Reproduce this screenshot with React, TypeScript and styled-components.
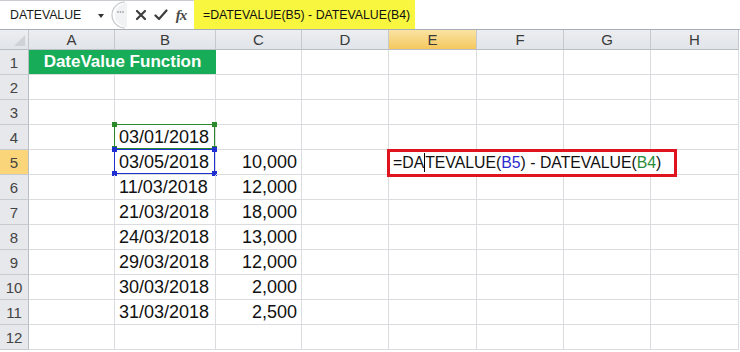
import React from "react";
import styled, { createGlobalStyle } from "styled-components";

const GlobalStyle = createGlobalStyle`
  html, body { margin: 0; padding: 0; background: #ffffff; overflow: hidden; }
  * { box-sizing: border-box; }
`;

const Page = styled.div`
  width: 740px;
  height: 352px;
  overflow: hidden;
  background: #ffffff;
  font-family: "Liberation Sans", Arial, sans-serif;
`;

const FormulaBar = styled.div`
  display: flex;
  align-items: stretch;
  height: 30px;
  border-top: 1px solid #c9ccd1;
  border-bottom: 1px solid #a9aeb6;
  background: #ffffff;
`;

const NameBox = styled.div`
  width: 108px;
  display: flex;
  align-items: center;
  justify-content: space-between;
  padding: 0 4px 0 10px;
  font-size: 12.3px;
  color: #1a1a1a;
`;

const Arrow = styled.span`
  width: 0;
  height: 0;
  border-left: 3.5px solid transparent;
  border-right: 3.5px solid transparent;
  border-top: 4px solid #333;
  margin-top: 2px;
`;

const Tools = styled.div`
  display: flex;
  align-items: center;
  width: 66px;
  padding-left: 3px;
`;

const ToolIcon = styled.span`
  width: 20px;
  display: flex;
  justify-content: center;
  align-items: center;
`;

const Fx = styled.span`
  font-family: "Liberation Serif", "Times New Roman", serif;
  font-style: italic;
  font-weight: bold;
  font-size: 15px;
  color: #4a4a4a;
  letter-spacing: -1px;
  width: 20px;
  text-align: center;
`;

const FormulaInput = styled.div<{ $hl?: boolean }>`
  width: ${(p) => (p.$hl ? "221px" : "auto")};
  flex: ${(p) => (p.$hl ? "none" : "1")};
  background: ${(p) => (p.$hl ? "#f8f63f" : "#ffffff")};
  display: flex;
  align-items: center;
  padding-left: 9px;
  font-size: 12.3px;
  color: #111;
  margin-top: -1px;
`;

const Grid = styled.div`
  display: grid;
  grid-template-columns: 29px 86px 101px 86px 87px 88px 87px 87px 88px;
  grid-template-rows: 20px repeat(12, 25px);
`;

const ColHead = styled.div<{ $active?: boolean }>`
  background: ${(p) =>
    p.$active
      ? "linear-gradient(#f9e3a3, #f5c85e)"
      : "linear-gradient(#eceef1, #e1e4e8)"};
  border-right: 1px solid #c5c9cf;
  border-bottom: 1px solid #b9bec5;
  display: flex;
  align-items: center;
  justify-content: center;
  font-size: 15px;
  color: #3a3a3a;
`;

const Corner = styled(ColHead)`
  position: relative;
  &::after {
    content: "";
    position: absolute;
    right: 3px;
    bottom: 3px;
    width: 0;
    height: 0;
    border-left: 11px solid transparent;
    border-bottom: 11px solid #cfd3d8;
  }
`;

const RowHead = styled.div<{ $active?: boolean }>`
  background: ${(p) => (p.$active ? "#fbd57a" : "#e6e8eb")};
  border-right: 1px solid #b9bec5;
  border-bottom: 1px solid #c7cbd0;
  display: flex;
  align-items: center;
  justify-content: center;
  font-size: 15px;
  color: #444;
`;

const Cell = styled.div<{ $align?: "left" | "right"; $span?: number }>`
  position: relative;
  grid-column: span ${(p) => p.$span ?? 1};
  border-right: 1px solid #dadcdf;
  border-bottom: 1px solid #dadcdf;
  display: flex;
  align-items: center;
  justify-content: ${(p) => (p.$align === "right" ? "flex-end" : "flex-start")};
  padding: 0 4px;
  font-size: 18px;
  color: #111;
  white-space: nowrap;
`;

const TitleCell = styled.div`
  grid-column: span 2;
  background: #17ad58;
  border-bottom: 1px solid #dadcdf;
  display: flex;
  align-items: center;
  justify-content: center;
  font-size: 17px;
  font-weight: bold;
  color: #ffffff;
`;

const Selection = styled.div<{ $color: string }>`
  position: absolute;
  inset: -1px 0 0 -1px;
  border: 1px solid ${(p) => p.$color};
  pointer-events: none;
  & > i {
    position: absolute;
    width: 5px;
    height: 5px;
    background: ${(p) => p.$color};
  }
  & > i:nth-child(1) { left: -3px; top: -3px; }
  & > i:nth-child(2) { right: -3px; top: -3px; }
  & > i:nth-child(3) { left: -3px; bottom: -3px; }
  & > i:nth-child(4) { right: -3px; bottom: -3px; }
`;

const FormulaCell = styled(Cell)`
  font-size: 15.8px;
  padding-left: 4px;
  z-index: 2;
`;

const RedBox = styled.div`
  position: absolute;
  left: -2px;
  top: -1px;
  width: 290px;
  height: 28px;
  border: 3px solid #e0141e;
  pointer-events: none;
`;

const Caret = styled.span`
  display: inline-block;
  width: 0;
  height: 19px;
  border-left: 1px solid #000;
  vertical-align: -4px;
`;

const Ref = styled.span<{ $c: string }>`
  color: ${(p) => p.$c};
`;

const cols = ["A", "B", "C", "D", "E", "F", "G", "H"];

const data: Record<number, [string, string]> = {
  4: ["03/01/2018", ""],
  5: ["03/05/2018", "10,000"],
  6: ["11/03/2018", "12,000"],
  7: ["21/03/2018", "18,000"],
  8: ["24/03/2018", "13,000"],
  9: ["29/03/2018", "12,000"],
  10: ["30/03/2018", "2,000"],
  11: ["31/03/2018", "2,500"],
};

function Handles() {
  return (
    <>
      <i />
      <i />
      <i />
      <i />
    </>
  );
}

function Row({ r }: { r: number }) {
  if (r === 1) {
    return (
      <>
        <RowHead>1</RowHead>
        <TitleCell>DateValue Function</TitleCell>
        {cols.slice(2).map((c) => (
          <Cell key={c} />
        ))}
      </>
    );
  }
  const d = data[r];
  return (
    <>
      <RowHead $active={r === 5}>{r}</RowHead>
      <Cell />
      <Cell>
        {d ? d[0] : ""}
        {r === 4 && (
          <Selection $color="#2a8a2a">
            <Handles />
          </Selection>
        )}
        {r === 5 && (
          <Selection $color="#1f2fd0">
            <Handles />
          </Selection>
        )}
      </Cell>
      <Cell $align="right">{d ? d[1] : ""}</Cell>
      {r === 5 ? (
        <>
          <Cell />
          <FormulaCell $span={4}>
            <span>
              =DA
              <Caret />
              TEVALUE(<Ref $c="#2a2ad0">B5</Ref>) - DATEVALUE(
              <Ref $c="#2a8a3a">B4</Ref>)
            </span>
            <RedBox />
          </FormulaCell>
        </>
      ) : (
        Array.from({ length: 5 }, (_, i) => <Cell key={i} />)
      )}
    </>
  );
}

export default function App() {
  return (
    <Page>
      <GlobalStyle />
      <FormulaBar>
        <NameBox>
          <span>DATEVALUE</span>
          <Arrow />
        </NameBox>
        <svg width="20" height="28" viewBox="0 0 20 28">
          <path d="M17 1 A 13 13 0 0 0 17 27" fill="none" stroke="#c3c6cb" strokeWidth="1.2" />
          <path d="M19 2 A 12 12 0 0 0 19 26" fill="#f1f2f4" stroke="none" />
          <circle cx="10" cy="11" r="0.9" fill="#a7abb1" />
          <circle cx="12.5" cy="11" r="0.9" fill="#a7abb1" />
          <circle cx="15" cy="11" r="0.9" fill="#a7abb1" />
        </svg>
        <Tools>
          <ToolIcon>
            <svg width="12" height="12" viewBox="0 0 12 12">
              <path d="M2 2 L10 10 M10 2 L2 10" stroke="#3d3d3d" strokeWidth="2.2" strokeLinecap="round" />
            </svg>
          </ToolIcon>
          <ToolIcon>
            <svg width="14" height="12" viewBox="0 0 14 12">
              <path d="M1.5 6.5 L5 10 L12.5 1.5" fill="none" stroke="#3d3d3d" strokeWidth="2.2" strokeLinecap="round" strokeLinejoin="round" />
            </svg>
          </ToolIcon>
          <Fx>fx</Fx>
        </Tools>
        <FormulaInput $hl>=DATEVALUE(B5) - DATEVALUE(B4)</FormulaInput>
        <FormulaInput />
      </FormulaBar>
      <Grid>
        <Corner />
        {cols.map((c) => (
          <ColHead key={c} $active={c === "E"}>
            {c}
          </ColHead>
        ))}
        {Array.from({ length: 12 }, (_, i) => (
          <Row key={i + 1} r={i + 1} />
        ))}
      </Grid>
    </Page>
  );
}
